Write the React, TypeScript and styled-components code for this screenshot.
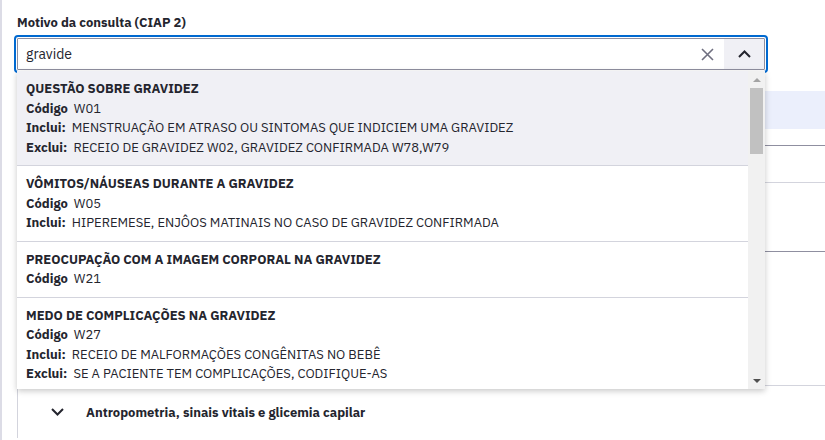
import React from "react";
import styled, { createGlobalStyle } from "styled-components";

const GlobalStyle = createGlobalStyle`
  html, body { margin: 0; padding: 0; background: #ffffff; }
  body {
    font-family: "IBM Plex Sans", "Noto Sans", "Liberation Sans", sans-serif;
    color: #24252e;
    width: 825px;
    height: 440px;
    overflow: hidden;
  }
  * { box-sizing: border-box; }
`;

const Page = styled.div`
  height: 440px;
  border-left: 2px solid #dcdce6;
  padding: 15px 0 0 15px;
`;

const Field = styled.div`
  display: flex;
  flex-direction: column;
  gap: 7px;
  width: 748px;
`;

const Label = styled.label`
  font-size: 13px;
  font-weight: 700;
  line-height: 16px;
`;

const InputBox = styled.div`
  position: relative;
  display: flex;
  align-items: stretch;
  height: 32px;
  border: 1px solid #8f8fa0;
  outline: 2px solid #0069d0;
  outline-offset: 1px;
  border-radius: 1px;
  background: #fff;
`;

const TextInput = styled.div`
  flex: 1;
  display: flex;
  align-items: center;
  padding-left: 8px;
  font-size: 14px;
`;

const ClearButton = styled.div`
  width: 34px;
  display: flex;
  align-items: center;
  justify-content: center;
  color: #6f6f80;
`;

const ToggleButton = styled.div`
  width: 40px;
  display: flex;
  align-items: center;
  justify-content: center;
  background: #f0f0f5;
  color: #24252e;
`;

const Menu = styled.div`
  position: absolute;
  top: 32px;
  left: -1px;
  width: 748px;
  height: 318px;
  display: flex;
  background: #fff;
  box-shadow: 0 2px 6px rgba(0, 0, 0, 0.22);
  z-index: 5;
`;

const List = styled.ul`
  flex: 1;
  margin: 0;
  padding: 0;
  list-style: none;
  overflow: hidden;
`;

const ScrollBar = styled.div`
  width: 17px;
  flex-shrink: 0;
  display: flex;
  flex-direction: column;
  background: #f1f1f1;
`;

const Arrow = styled.div<{ $color: string }>`
  height: 17px;
  display: flex;
  align-items: center;
  justify-content: center;
  color: ${(p) => p.$color};
`;

const Track = styled.div`
  flex: 1;
  padding: 0 2px;
`;

const Thumb = styled.div`
  height: 66px;
  background: #c1c1c1;
`;

const Item = styled.li<{ $active?: boolean }>`
  padding: 8px 9px;
  font-size: 13px;
  line-height: 19.5px;
  border-bottom: 1px solid #d3d4dd;
  background: ${(p) => (p.$active ? "#f0f0f5" : "#ffffff")};
`;

const Title = styled.div`
  font-weight: 700;
  white-space: nowrap;
`;

const Line = styled.div`
  display: flex;
  gap: 6px;
  white-space: nowrap;
`;

const Key = styled.span`
  font-weight: 700;
`;

const Section = styled.div`
  margin-top: 21px;
  border-left: 1px solid #d3d4dd;
  display: flex;
  flex-direction: column;
`;

const Band = styled.div`
  height: 38px;
  flex-shrink: 0;
  background: #ebeffc;
`;

const Row = styled.div<{ $h: number; $dark?: boolean }>`
  height: ${(p) => p.$h}px;
  flex-shrink: 0;
  border-bottom: 1px solid ${(p) => (p.$dark ? "#8f8fa0" : "#d3d4dd")};
`;

const Accordion = styled.div`
  display: flex;
  align-items: center;
  gap: 22px;
  height: 52px;
  flex-shrink: 0;
  padding-left: 33px;
  font-size: 13px;
  font-weight: 700;
  white-space: nowrap;
`;

type Opt = { title: string; code: string; inc?: string; exc?: string };

const options: Opt[] = [
  {
    title: "QUESTÃO SOBRE GRAVIDEZ",
    code: "W01",
    inc: "MENSTRUAÇÃO EM ATRASO OU SINTOMAS QUE INDICIEM UMA GRAVIDEZ",
    exc: "RECEIO DE GRAVIDEZ W02, GRAVIDEZ CONFIRMADA W78,W79",
  },
  {
    title: "VÔMITOS/NÁUSEAS DURANTE A GRAVIDEZ",
    code: "W05",
    inc: "HIPEREMESE, ENJÔOS MATINAIS NO CASO DE GRAVIDEZ CONFIRMADA",
  },
  { title: "PREOCUPAÇÃO COM A IMAGEM CORPORAL NA GRAVIDEZ", code: "W21" },
  {
    title: "MEDO DE COMPLICAÇÕES NA GRAVIDEZ",
    code: "W27",
    inc: "RECEIO DE MALFORMAÇÕES CONGÊNITAS NO BEBÊ",
    exc: "SE A PACIENTE TEM COMPLICAÇÕES, CODIFIQUE-AS",
  },
];

const TriUp = () => (
  <svg width="8" height="4" viewBox="0 0 8 4">
    <polygon points="0,4 4,0 8,4" fill="currentColor" />
  </svg>
);

const TriDown = () => (
  <svg width="8" height="4" viewBox="0 0 8 4">
    <polygon points="0,0 8,0 4,4" fill="currentColor" />
  </svg>
);

const XIcon = () => (
  <svg width="13" height="13" viewBox="0 0 13 13" fill="none">
    <path d="M1 1L12 12M12 1L1 12" stroke="currentColor" strokeWidth="1.6" />
  </svg>
);

const ChevronUp = () => (
  <svg width="13" height="8" viewBox="0 0 13 8" fill="none">
    <path d="M1 7L6.5 1.5L12 7" stroke="currentColor" strokeWidth="2" />
  </svg>
);

const ChevronDown = () => (
  <svg width="13" height="8" viewBox="0 0 13 8" fill="none">
    <path d="M1 1L6.5 6.5L12 1" stroke="currentColor" strokeWidth="2" />
  </svg>
);

export default function App() {
  return (
    <>
      <GlobalStyle />
      <Page>
        <Field>
          <Label>Motivo da consulta (CIAP 2)</Label>
          <InputBox>
            <TextInput>gravide</TextInput>
            <ClearButton>
              <XIcon />
            </ClearButton>
            <ToggleButton>
              <ChevronUp />
            </ToggleButton>
            <Menu>
              <List>
                {options.map((o, i) => (
                  <Item key={o.code} $active={i === 0}>
                    <Title>{o.title}</Title>
                    <Line>
                      <Key>Código</Key>
                      <span>{o.code}</span>
                    </Line>
                    {o.inc && (
                      <Line>
                        <Key>Inclui:</Key>
                        <span>{o.inc}</span>
                      </Line>
                    )}
                    {o.exc && (
                      <Line>
                        <Key>Exclui:</Key>
                        <span>{o.exc}</span>
                      </Line>
                    )}
                  </Item>
                ))}
              </List>
              <ScrollBar>
                <Arrow $color="#a3a3a3">
                  <TriUp />
                </Arrow>
                <Track>
                  <Thumb />
                </Track>
                <Arrow $color="#505050">
                  <TriDown />
                </Arrow>
              </ScrollBar>
            </Menu>
          </InputBox>
        </Field>
        <Section>
          <Band />
          <Row $h={17} $dark />
          <Row $h={37} />
          <Row $h={69} $dark />
          <Row $h={134} />
          <Accordion>
            <ChevronDown />
            <span>Antropometria, sinais vitais e glicemia capilar</span>
          </Accordion>
        </Section>
      </Page>
    </>
  );
}
